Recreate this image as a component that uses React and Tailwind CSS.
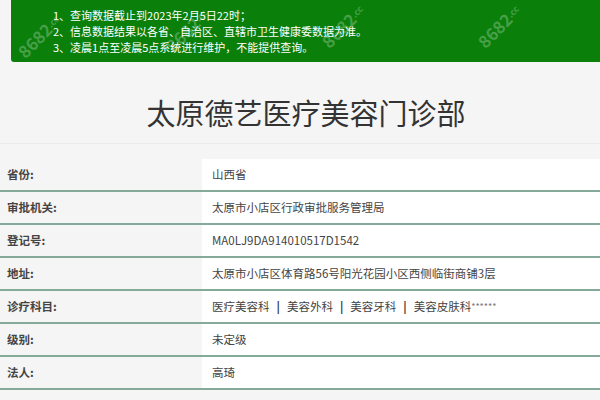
import React from 'react';

const rows = [
  { label: '省份:', value: '山西省' },
  { label: '审批机关:', value: '太原市小店区行政审批服务管理局' },
  { label: '登记号:', value: 'MA0LJ9DA914010517D1542' },
  { label: '地址:', value: '太原市小店区体育路56号阳光花园小区西侧临街商铺3层' },
  { label: '诊疗科目:', value: 'subjects' },
  { label: '级别:', value: '未定级' },
  { label: '法人:', value: '高琦' },
];

const subjects = ['医疗美容科', '美容外科', '美容牙科', '美容皮肤科'];

const Watermark = ({ className }) => (
  <span className={`absolute -rotate-45 text-[17px] font-bold text-white/25 select-none pointer-events-none ${className}`}>
    8682<span className="text-[9px] align-top">.cc</span>
  </span>
);

const App = () => {
  return (
    <div
      className="w-[600px] h-[400px] overflow-hidden bg-[#f5f5f5] text-[#333]"
      style={{ fontFamily: '"Microsoft YaHei", "Noto Sans CJK SC", "Liberation Sans", sans-serif' }}
    >
      {/* Notice banner */}
      <div className="pl-[11px]">
        <div className="relative h-[62px] bg-[#0a800b] rounded-bl-[3px] pt-[7px] pl-[42px] text-white text-[11px] leading-[16px] overflow-hidden">
          <p>1、查询数据截止到2023年2月5日22时；</p>
          <p>2、信息数据结果以各省、自治区、直辖市卫生健康委数据为准。</p>
          <p>3、凌晨1点至凌晨5点系统进行维护，不能提供查询。</p>
          <Watermark className="left-[2px] top-[28px]" />
          <Watermark className="left-[150px] top-[22px]" />
          <Watermark className="left-[306px] top-[18px]" />
          <Watermark className="left-[462px] top-[18px]" />
        </div>
      </div>

      {/* Title */}
      <div className="pl-[12px] pt-[32px] pb-[13px] border-b border-[#ebebeb]">
        <h1 className="text-center text-[29px] leading-[36px] text-[#333] font-normal">
          太原德艺医疗美容门诊部
        </h1>
      </div>

      {/* Detail table */}
      <div className="mt-[15px]">
        {rows.map((row) => (
          <div key={row.label} className="flex h-[33px] border-b-2 border-[#86aa9a] text-[11.5px]">
            <div className="w-[202px] shrink-0 flex items-center pl-[7px] font-bold text-[#444]">
              {row.label}
            </div>
            <div className="flex-1 bg-white flex items-center pl-[10px] text-[#444]">
              {row.value === 'subjects' ? (
                <span className="flex items-center">
                  {subjects.map((s, i) => (
                    <React.Fragment key={s}>
                      {i > 0 && <span className="px-[7px] font-bold text-[#333]">|</span>}
                      <span>{s}</span>
                    </React.Fragment>
                  ))}
                  <span className="text-[9px] text-[#777]">******</span>
                </span>
              ) : (
                row.value
              )}
            </div>
          </div>
        ))}
      </div>
    </div>
  );
};

export default App;
